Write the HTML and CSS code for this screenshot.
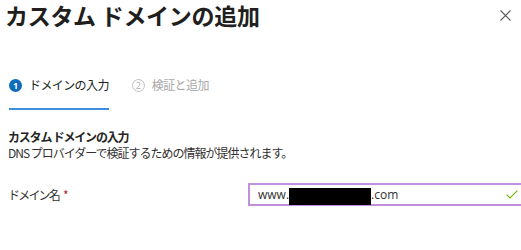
FILE: index.html
```html
<!DOCTYPE html>
<html lang="ja">
<head>
<meta charset="utf-8">
<link rel="stylesheet" href="styles.css">
</head>
<body>
<div class="panel">
  <header class="header">
    <h1 class="title">カスタム ドメインの追加</h1>
    <button class="close" aria-label="閉じる">
      <svg width="11" height="11" viewBox="0 0 11 11"><path d="M0.5 0.5 L10.5 10.5 M10.5 0.5 L0.5 10.5" stroke="#605e5c" stroke-width="1.1" fill="none"/></svg>
    </button>
  </header>

  <nav class="steps">
    <div class="step active">
      <span class="num filled">1</span>
      <span class="step-label">ドメインの入力</span>
    </div>
    <div class="step">
      <span class="num outline">2</span>
      <span class="step-label muted">検証と追加</span>
    </div>
  </nav>

  <section class="section">
    <h2 class="section-title">カスタム ドメインの入力</h2>
    <p class="section-desc">DNS プロバイダーで検証するための情報が提供されます。</p>
  </section>

  <div class="field">
    <label class="field-label">ドメイン名 <span class="req">*</span></label>
    <div class="input">
      <span class="value">www.<span class="redact"></span>.com</span>
      <svg class="check" width="12" height="9" viewBox="0 0 12 9"><path d="M0.6 4.6 L4 8 L11.4 0.6" stroke="#6bb700" stroke-width="1.1" fill="none"/></svg>
    </div>
  </div>
</div>
</body>
</html>
```

FILE: styles.css
```css
html, body {
  margin: 0;
  padding: 0;
  background: #ffffff;
  overflow: hidden;
}
body {
  width: 521px;
  height: 250px;
  font-family: "Noto Sans CJK JP", "Noto Sans", sans-serif;
  color: #323130;
}
.panel {
  display: flex;
  flex-direction: column;
}
.header {
  display: flex;
  justify-content: space-between;
  align-items: flex-start;
  padding: 0 10px 0 5px;
}
.title {
  margin: 0;
  font-size: 23px;
  line-height: 30px;
  font-weight: 700;
  color: #201f1e;
  letter-spacing: -0.3px;
}
.close {
  border: 0;
  background: none;
  padding: 0;
  margin-top: 10px;
  width: 11px;
  height: 11px;
  display: flex;
}
.steps {
  display: flex;
  gap: 23px;
  padding: 47px 0 0 9px;
}
.step {
  display: flex;
  align-items: center;
  gap: 7px;
  padding-bottom: 15px;
  border-bottom: 2px solid transparent;
}
.step.active {
  border-bottom-color: #3b8fde;
}
.num {
  width: 13px;
  height: 13px;
  border-radius: 50%;
  box-sizing: border-box;
  display: flex;
  align-items: center;
  justify-content: center;
  font-family: "Open Sans", "Liberation Sans", sans-serif;
  font-size: 9px;
  font-weight: 700;
  line-height: 1;
}
.num.filled {
  background: #0f6cbd;
  color: #fff;
}
.num.outline {
  border: 1px solid #c0c0c0;
  color: #b0b0b0;
  font-weight: 400;
}
.step-label {
  font-size: 12px;
  line-height: 16px;
  color: #201f1e;
  letter-spacing: -0.6px;
}
.step-label.muted {
  color: #a8a8a8;
}
.section {
  padding: 19px 0 0 8px;
}
.section-title {
  margin: 0;
  font-size: 12px;
  line-height: 16px;
  font-weight: 700;
  color: #252423;
  letter-spacing: -1.2px;
}
.section-desc {
  margin: 0;
  font-size: 12px;
  line-height: 16px;
  letter-spacing: -1px;
  color: #323130;
}
.field {
  display: grid;
  grid-template-columns: 240px 280px;
  align-items: center;
  padding: 22px 0 0 8px;
}
.field-label {
  font-size: 12px;
  line-height: 16px;
  color: #323130;
  letter-spacing: -1.8px;
}
.req {
  color: #a4262c;
  margin-left: 3px;
}
.input {
  height: 23px;
  box-sizing: border-box;
  border: 2px solid #c190dc;
  border-right: 0;
  display: flex;
  align-items: center;
  justify-content: space-between;
  padding: 0 6px 0 8px;
  width: 276px;
}
.value {
  font-family: "Open Sans", "Liberation Sans", sans-serif;
  font-size: 12px;
  color: #323130;
  display: flex;
  align-items: center;
}
.redact {
  display: inline-block;
  width: 82px;
  height: 17px;
  background: #000;
  margin-top: 3px;
}
.check {
  display: block;
}
```
